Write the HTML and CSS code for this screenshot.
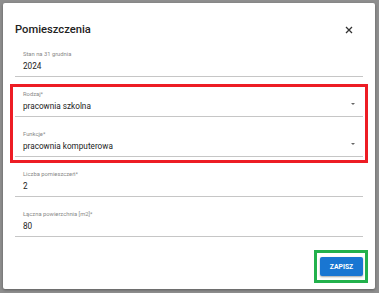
FILE: index.html
```html
<!DOCTYPE html>
<html lang="pl">
<head>
  <meta charset="UTF-8" />
  <title>Pomieszczenia</title>
  <link rel="stylesheet" href="styles.css">
</head>
<body>
  <div class="dialog">
    <div class="header">
      <h2>Pomieszczenia</h2>
      <svg class="close" width="8" height="8" viewBox="0 0 8 8">
        <path d="M1 1L7 7M7 1L1 7" stroke="#333" stroke-width="1.3" />
      </svg>
    </div>
    <div class="field">
      <div class="label">Stan na 31 grudnia</div>
      <div class="value">2024</div>
    </div>
    <div class="field">
      <div class="label">Rodzaj*</div>
      <div class="value">pracownia szkolna <span class="arrow"></span></div>
    </div>
    <div class="field">
      <div class="label">Funkcje*</div>
      <div class="value">pracownia komputerowa <span class="arrow"></span></div>
    </div>
    <div class="field">
      <div class="label">Liczba pomieszczeń*</div>
      <div class="value">2</div>
    </div>
    <div class="field">
      <div class="label">Łączna powierzchnia [m2]*</div>
      <div class="value">80</div>
    </div>
    <div class="footer">
      <button class="save">Zapisz</button>
    </div>
  </div>
  <!-- zaznaczenia na zrzucie -->
  <div class="mark mark-red"></div>
  <div class="mark mark-green"></div>
</body>
</html>
```

FILE: styles.css
```css
body {
  margin: 0;
  height: 293px;
  overflow: hidden;
  background-color: #8e8e8e;
  font-family: Roboto, "Liberation Sans", sans-serif;
}
.dialog {
  margin: 3px 0 0 3px;
  width: 372px;
  height: 286px;
  box-sizing: border-box;
  padding: 0 12px;
  background-color: #fff;
  border-radius: 2px;
  box-shadow: 0 1px 3px rgba(0,0,0,0.35);
}
.header {
  display: flex;
  justify-content: space-between;
  align-items: center;
  height: 34px;
  padding-top: 20px;
  box-sizing: border-box;
}
.header h2 {
  margin: 0;
  font-size: 11.2px;
  line-height: 12px;
  font-weight: 500;
  color: #222;
}
.close {
  margin-right: 10px;
}
.field {
  height: 40px;
  box-sizing: border-box;
  padding: 13px 8px 0;
  border-bottom: 1px solid #c6c6c6;
}
.label {
  font-size: 5.8px;
  line-height: 8px;
  color: #888;
}
.value {
  display: flex;
  justify-content: space-between;
  align-items: center;
  margin-top: 2px;
  font-size: 8.2px;
  line-height: 12px;
  color: #222;
}
.arrow {
  width: 0;
  height: 0;
  margin-top: -4px;
  border-left: 2.5px solid transparent;
  border-right: 2.5px solid transparent;
  border-top: 2.5px solid #666;
}
.footer {
  display: flex;
  justify-content: flex-end;
  padding-top: 20px;
}
.save {
  width: 43px;
  height: 19px;
  padding: 0;
  border: none;
  border-radius: 2px;
  background-color: #1976d2;
  color: #fff;
  font-family: Roboto, "Liberation Sans", sans-serif;
  font-size: 6.8px;
  font-weight: 700;
  text-transform: uppercase;
  box-shadow: 0 1px 2px rgba(0,0,0,0.35);
}
.mark {
  position: absolute;
  box-sizing: border-box;
}
.mark-red {
  left: 10px;
  top: 84px;
  width: 358px;
  height: 79px;
  border: 3px solid #ed1c24;
}
.mark-green {
  left: 314px;
  top: 250px;
  width: 54px;
  height: 33px;
  border: 3px solid #22b14c;
}
```
